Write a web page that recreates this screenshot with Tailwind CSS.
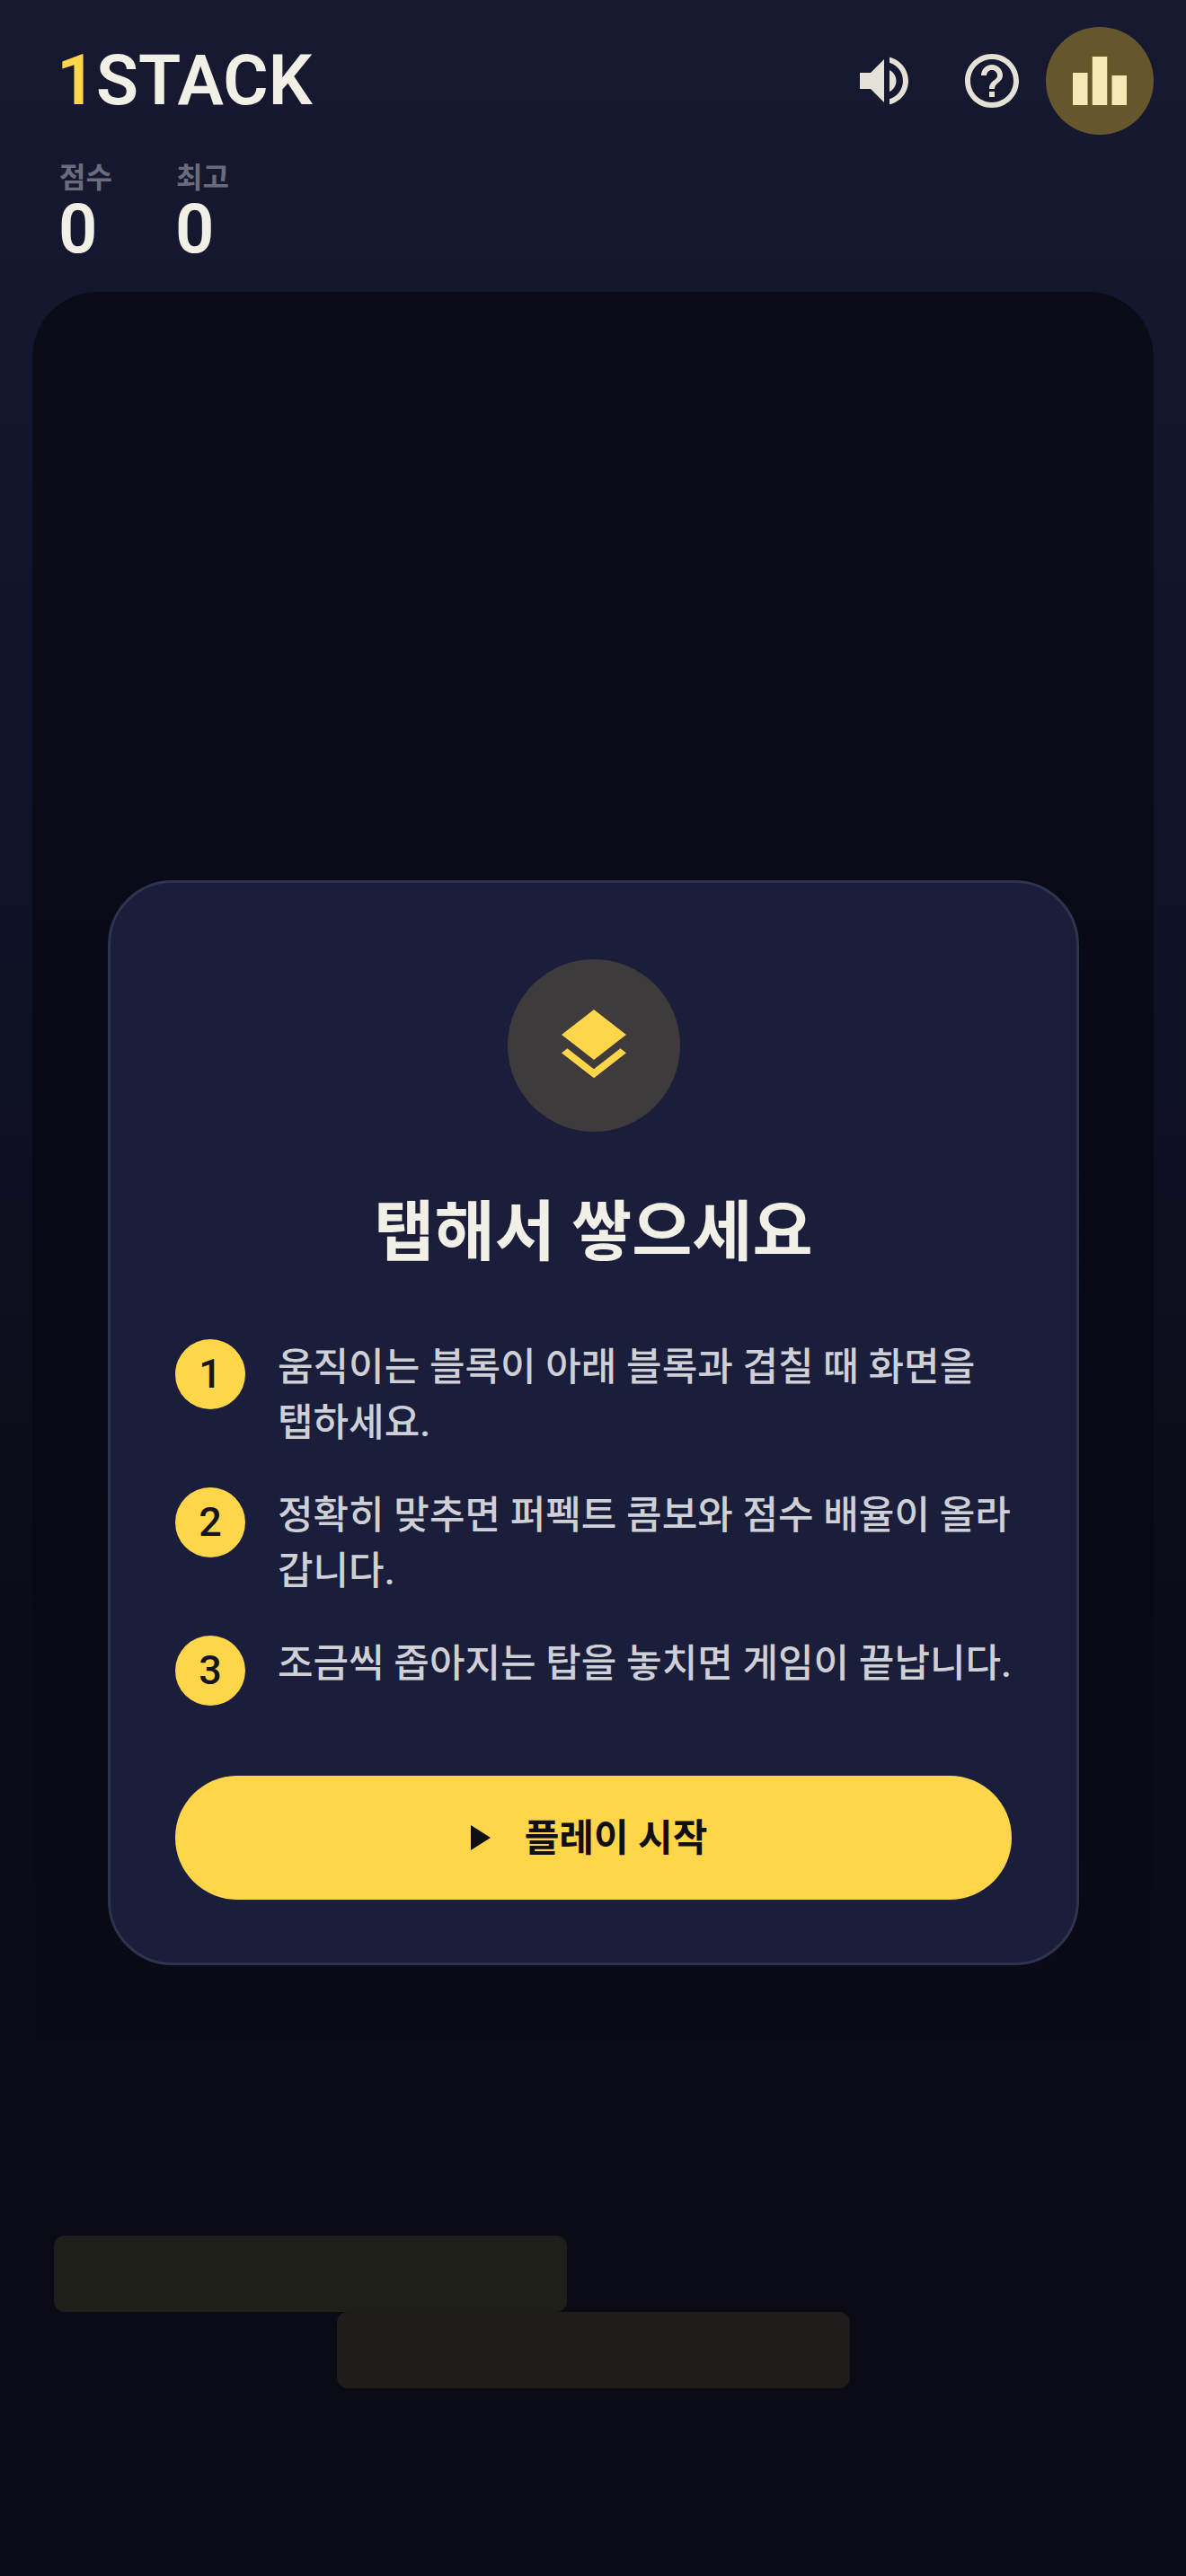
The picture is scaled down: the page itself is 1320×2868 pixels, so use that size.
<!DOCTYPE html>
<html lang="ko">
<head>
  <meta charset="UTF-8">
  <meta name="viewport" content="width=device-width, initial-scale=1.0">
  <title>1STACK</title>
  <script src="https://cdn.jsdelivr.net/npm/@tailwindcss/browser@4"></script>
</head>
<body class="bg-[#0a0b14] font-['Roboto','Noto_Sans_CJK_KR',sans-serif]">
  <div class="flex flex-col w-[1320px] h-[2868px] overflow-hidden bg-gradient-to-b from-[#161930] via-[#11132a] via-30% to-[#0a0b14] to-70%">

    <!-- header -->
    <header class="h-[325px] shrink-0 pl-[63px] pr-[36px] pt-[30px] flex justify-between items-start">
      <div>
        <div class="h-[120px] flex items-center text-[77px] font-semibold leading-none text-[#f1efe6]"><span class="text-[#ffd54a]">1</span>STACK</div>
        <div class="flex gap-[60px] mt-[30px] pl-[3px]">
          <div class="w-[70px]">
            <div class="text-[32px] leading-[36px] font-bold text-[#6a6c7e]">점수</div>
            <div class="mt-[4px] -ml-[1px] text-[76px] leading-[70px] font-semibold text-[#f1efe6]">0</div>
          </div>
          <div class="w-[70px]">
            <div class="text-[32px] leading-[36px] font-bold text-[#6a6c7e]">최고</div>
            <div class="mt-[4px] -ml-[1px] text-[76px] leading-[70px] font-semibold text-[#f1efe6]">0</div>
          </div>
        </div>
      </div>
      <div class="flex items-center">
        <div class="w-[120px] h-[120px] flex items-center justify-center">
          <svg width="72" height="72" viewBox="0 0 24 24" fill="#e6e1d6"><path d="M3 9v6h4l5 5V4L7 9H3zm13.5 3c0-1.77-1.02-3.29-2.5-4.03v8.05c1.48-.73 2.5-2.25 2.5-4.02zM14 3.23v2.06c2.89.86 5 3.54 5 6.71s-2.11 5.85-5 6.71v2.06c4.01-.91 7-4.49 7-8.77s-2.99-7.86-7-8.77z"/></svg>
        </div>
        <div class="w-[120px] h-[120px] flex items-center justify-center">
          <svg width="72" height="72" viewBox="0 0 24 24" fill="#e6e1d6"><path d="M11 18h2v-2h-2v2zm1-16C6.48 2 2 6.48 2 12s4.48 10 10 10 10-4.48 10-10S17.52 2 12 2zm0 18c-4.41 0-8-3.59-8-8s3.59-8 8-8 8 3.59 8 8-3.59 8-8 8zm0-14c-2.21 0-4 1.79-4 4h2c0-1.1.9-2 2-2s2 .9 2 2c0 2-3 1.75-3 5h2c0-2.25 3-2.5 3-5 0-2.21-1.79-4-4-4z"/></svg>
        </div>
        <div class="w-[120px] h-[120px] rounded-full bg-[#66562b] flex items-center justify-center">
          <svg width="72" height="72" viewBox="0 0 24 24" fill="#f6e7b4"><path d="M7.5 21H2V9h5.5v12zm7.25-18h-5.5v18h5.5V3zM22 10h-5.5v11H22V10z"/></svg>
        </div>
      </div>
    </header>

    <!-- game area -->
    <main class="relative mx-[36px] mb-[16px] w-[1248px] flex-1 rounded-[72px] bg-gradient-to-b from-[#0a0d18] via-[#080916] via-40% to-[#0a0b14]">
      <!-- stacked blocks behind the dialog -->
      <div class="absolute left-[24px] top-[2164px] w-[571px] h-[85px] rounded-[12px] bg-[#1f1f1a]"></div>
      <div class="absolute left-[339px] top-[2249px] w-[571px] h-[85px] rounded-[12px] bg-[#1e1d1b]"></div>

      <!-- start dialog -->
      <div class="absolute left-[84px] top-[655px] w-[1081px] h-[1208px] rounded-[72px] border-[3px] border-[#303350] bg-[#1a1e3a] px-[72px] pt-[85px]">
        <div class="mx-auto w-[192px] h-[192px] rounded-full bg-[#3f3a3c] flex items-center justify-center">
          <svg width="96" height="96" viewBox="0 0 24 24" fill="#ffd54a"><path d="M11.99 18.54l-7.37-5.73L3 14.07l9 7 9-7-1.63-1.27-7.38 5.74zM12 16l7.36-5.73L21 9l-9-7-9 7 1.63 1.27L12 16z"/></svg>
        </div>
        <h2 class="mt-[62px] text-center text-[73px] leading-[100px] font-bold text-[#f1efe6]">탭해서 쌓으세요</h2>

        <ol class="mt-[69px] flex flex-col gap-[41px]">
          <li class="flex gap-[36px]">
            <div class="w-[78px] h-[78px] shrink-0 rounded-full bg-[#ffd54a] flex items-center justify-center text-[45px] font-medium text-[#15151f]">1</div>
            <p class="-mr-[4px] text-[43px] leading-[62px] font-medium text-[#cfcfd6]">움직이는 블록이 아래 블록과 겹칠 때 화면을 탭하세요.</p>
          </li>
          <li class="flex gap-[36px]">
            <div class="w-[78px] h-[78px] shrink-0 rounded-full bg-[#ffd54a] flex items-center justify-center text-[45px] font-medium text-[#15151f]">2</div>
            <p class="-mr-[4px] text-[43px] leading-[62px] font-medium text-[#cfcfd6]">정확히 맞추면 퍼펙트 콤보와 점수 배율이 올라갑니다.</p>
          </li>
          <li class="flex gap-[36px]">
            <div class="w-[78px] h-[78px] shrink-0 rounded-full bg-[#ffd54a] flex items-center justify-center text-[45px] font-medium text-[#15151f]">3</div>
            <p class="-mr-[4px] text-[43px] leading-[62px] font-medium text-[#cfcfd6]">조금씩 좁아지는 탑을 놓치면 게임이 끝납니다.</p>
          </li>
        </ol>

        <button class="mt-[78px] w-full h-[138px] rounded-full bg-[#ffd54a] pr-[26px] flex items-center justify-center gap-[28px] text-[42px] font-bold text-[#0f0f14]">
          <svg width="48" height="48" viewBox="0 0 24 24" fill="#0f0f14"><path d="M8 5v14l11-7z"/></svg>
          플레이 시작
        </button>
      </div>
    </main>
  </div>
</body>
</html>
